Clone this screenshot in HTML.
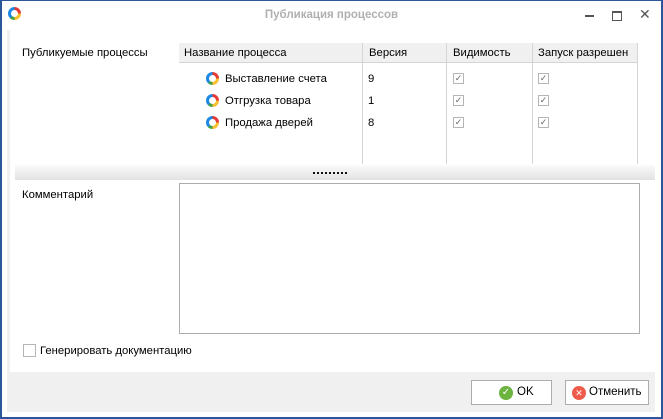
<!DOCTYPE html><html><head><meta charset="utf-8"><style>
*{box-sizing:border-box;margin:0;padding:0}
body{width:663px;height:419px;background:#fff;font-family:"Liberation Sans",sans-serif;font-size:11.3px;color:#000;position:relative;overflow:hidden}
.a{position:absolute}
.ring{position:absolute;width:13px;height:13px;border-radius:50%;background:conic-gradient(#e53935 0 25%,#fbc02d 25% 50%,#43a047 50% 62%,#1e88e5 62% 100%)}
.ring:after{content:"";position:absolute;left:3px;top:3px;width:7px;height:7px;border-radius:50%;background:#fff}
.cb{position:absolute;width:11px;height:11px;border:1px solid #b5b5b5;background:#fff;color:#666;font-size:9px;line-height:9px;text-align:center}
.vl{position:absolute;top:43px;height:121px;width:1px;background:#d5d5d5}
.btn{position:absolute;top:380px;height:25px;border:1px solid #adadad;background:#fff;font-size:11.5px;line-height:23px}
</style></head><body>
<div class="a" style="left:0;top:0;width:663px;height:419px;border:1px solid #2b579a;border-left-width:2px;border-right-width:2px;border-bottom-width:2px"></div>
<div class="ring" style="left:8px;top:7px"></div>
<div class="a" style="left:0;width:663px;top:9px;text-align:center;color:#b0b0b0;font-weight:bold;font-size:11.5px">Публикация процессов</div>
<div class="a" style="left:585px;top:15px;width:9px;height:2px;background:#555"></div>
<div class="a" style="left:612px;top:11px;width:10px;height:10px;border:1px solid #555;border-top-width:2px"></div>
<div class="a" style="left:639px;top:6px;font-size:14px;color:#555">✕</div>
<div class="a" style="left:7px;top:30px;width:3px;height:342px;background:#f0f0f0"></div>
<div class="a" style="left:22px;top:47px">Публикуемые процессы</div>
<div class="a" style="left:179px;top:43px;width:459px;height:20px;background:#f0f0f0;border-bottom:1px solid #d5d5d5"></div>
<div class="a" style="left:184px;top:47px">Название процесса</div>
<div class="a" style="left:369px;top:47px">Версия</div>
<div class="a" style="left:453px;top:47px">Видимость</div>
<div class="a" style="left:538px;top:47px">Запуск разрешен</div>
<div class="vl" style="left:362px"></div><div class="vl" style="left:446px"></div><div class="vl" style="left:532px"></div><div class="vl" style="left:637px"></div>
<div class="ring" style="left:206px;top:72px"></div><div class="a" style="left:225px;top:73px">Выставление счета</div><div class="a" style="left:368px;top:73px">9</div>
<div class="ring" style="left:206px;top:94px"></div><div class="a" style="left:225px;top:95px">Отгрузка товара</div><div class="a" style="left:368px;top:95px">1</div>
<div class="ring" style="left:206px;top:116px"></div><div class="a" style="left:225px;top:117px">Продажа дверей</div><div class="a" style="left:368px;top:117px">8</div>
<div class="cb" style="left:453px;top:73px">✓</div><div class="cb" style="left:538px;top:73px">✓</div>
<div class="cb" style="left:453px;top:95px">✓</div><div class="cb" style="left:538px;top:95px">✓</div>
<div class="cb" style="left:453px;top:117px">✓</div><div class="cb" style="left:538px;top:117px">✓</div>
<div class="a" style="left:15px;top:165px;width:640px;height:15px;background:linear-gradient(#fafafa,#e2e2e2)"></div>
<div class="a" style="left:313px;top:172px;width:34px;height:2px;background:repeating-linear-gradient(90deg,#111 0 2px,transparent 2px 4px)"></div>
<div class="a" style="left:22px;top:189px">Комментарий</div>
<div class="a" style="left:179px;top:183px;width:461px;height:151px;border:1px solid #acacac"></div>
<div class="cb" style="left:23px;top:344px;width:13px;height:13px"></div>
<div class="a" style="left:40px;top:345px">Генерировать документацию</div>
<div class="a" style="left:7px;top:372px;width:648px;height:40px;background:#f0f0f0"></div>
<div class="btn" style="left:471px;width:81px"><span class="a" style="left:27px;top:5px;width:14px;height:14px;border-radius:50%;background:#6cb33f;color:#fff;font-size:10px;line-height:14px;text-align:center">✓</span><span class="a" style="left:45px">OK</span></div>
<div class="btn" style="left:565px;width:84px"><span class="a" style="left:6px;top:5px;width:14px;height:14px;border-radius:50%;background:#ef5b4b;color:#fff;font-size:9px;line-height:14px;text-align:center">✕</span><span class="a" style="left:23px">Отменить</span></div>
</body></html>
